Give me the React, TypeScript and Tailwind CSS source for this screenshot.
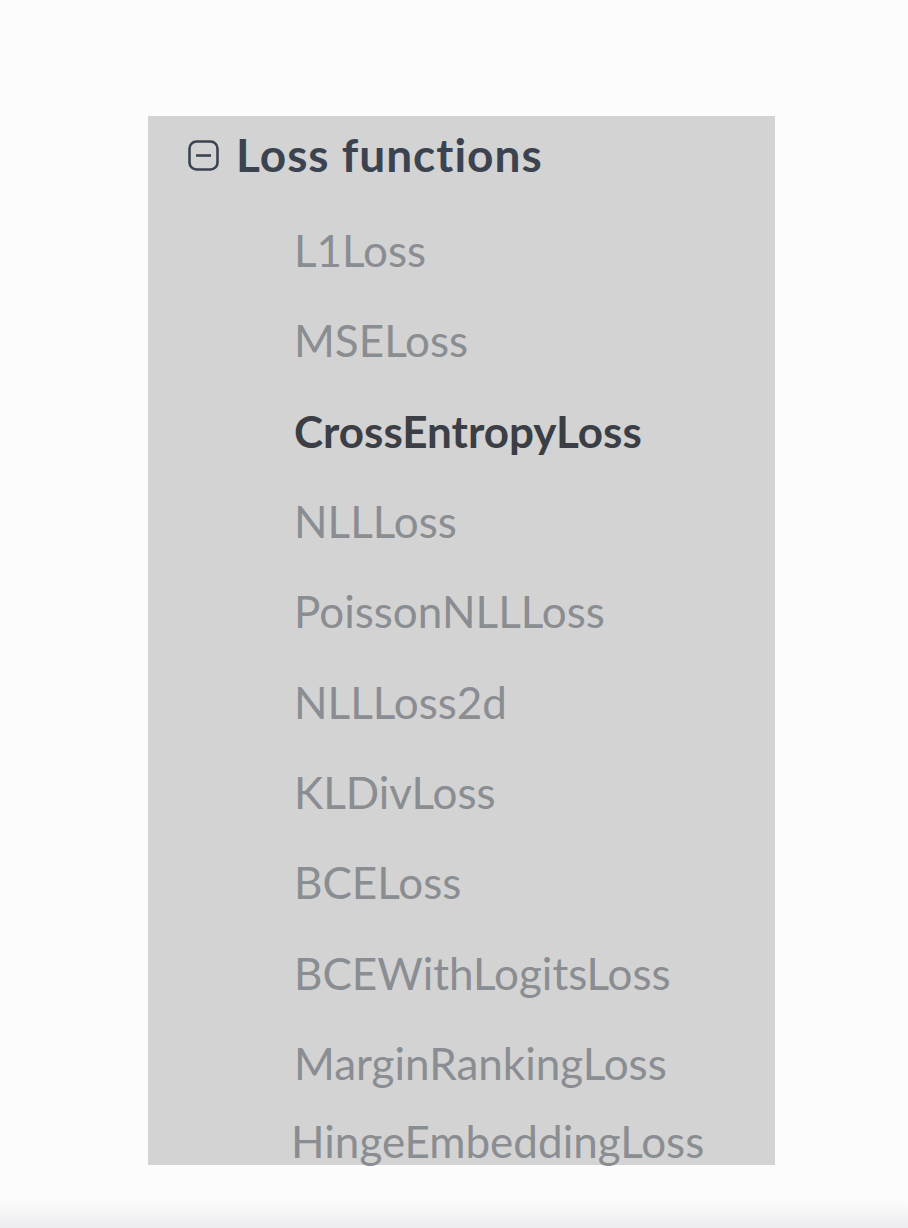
import { useState } from "react";

const losses = [
  "L1Loss",
  "MSELoss",
  "CrossEntropyLoss",
  "NLLLoss",
  "PoissonNLLLoss",
  "NLLLoss2d",
  "KLDivLoss",
  "BCELoss",
  "BCEWithLogitsLoss",
  "MarginRankingLoss",
];

const MinusBox = () => (
  <svg width="31" height="31" viewBox="0 0 31 31" fill="none">
    <rect x="1.5" y="1.5" width="28" height="28" rx="7" stroke="#3c4350" strokeWidth="2.6" />
    <line x1="8" y1="15.5" x2="23" y2="15.5" stroke="#3c4350" strokeWidth="2.6" />
  </svg>
);

export default function App() {
  const [active, setActive] = useState("CrossEntropyLoss");

  return (
    <div className="min-h-[1228px] w-full bg-[#fcfcfd] flex flex-col font-['Lato','Liberation_Sans',sans-serif]">
      <div className="pt-[116px] pl-[148px]">
        <div className="w-[627px] h-[1049px] bg-[#d3d3d3] flex flex-col">
          <div className="flex items-center gap-[17px] pl-[40px] pb-[9px] h-[87px]">
            <MinusBox />
            <span className="text-[46px] tracking-[1px] font-bold text-[#3c4350] leading-none">Loss functions</span>
          </div>
          <ul className="flex flex-col pl-[146px] pt-[2px]">
            {losses.map((name) => (
              <li key={name} className="h-[90.3px] flex items-center">
                <button
                  onClick={() => setActive(name)}
                  className={
                    "text-[44px] leading-none " +
                    (active === name ? "font-bold text-[#3b3f45]" : "text-[#8a8d91]")
                  }
                >
                  {name}
                </button>
              </li>
            ))}
            <li className="-ml-[3px] text-[44px] leading-none text-[#8a8d91] pt-[11px]">HingeEmbeddingLoss</li>
          </ul>
        </div>
      </div>
      <div className="flex-1" />
      <div className="h-[28px] bg-gradient-to-b from-[#fcfcfd] to-[#ececee]" />
    </div>
  );
}
